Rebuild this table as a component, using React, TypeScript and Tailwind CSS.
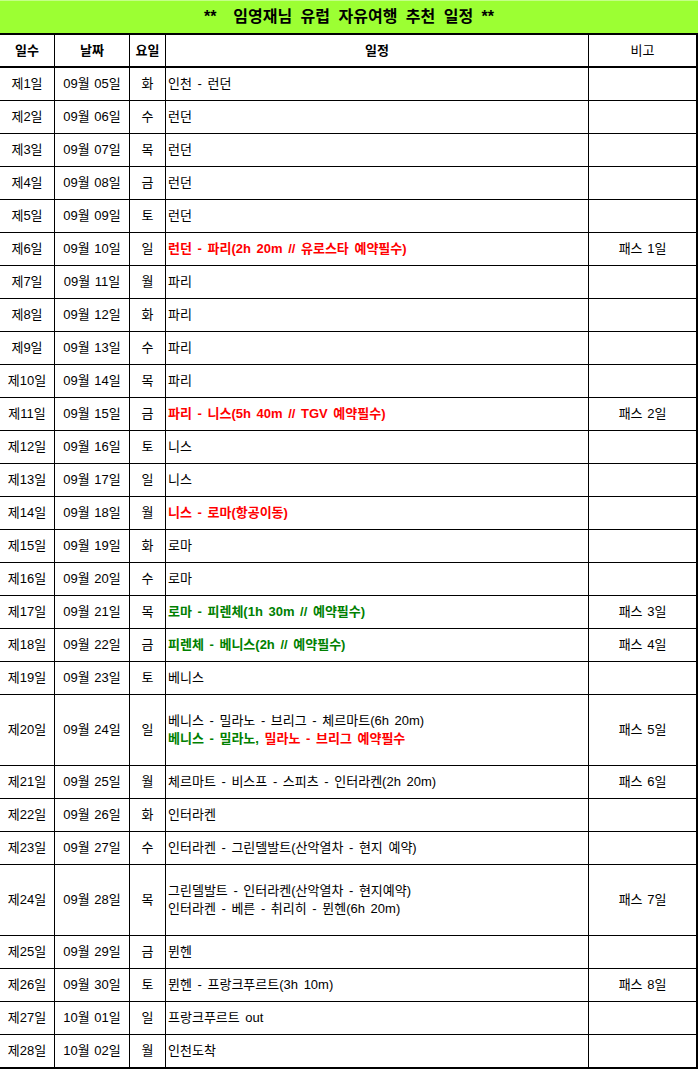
import React from 'react'

type Seg = { t: string; c?: 'red' | 'green' }
type Row = {
  day: number
  date: string
  dow: string
  plan: Seg[][]
  note?: string
}

const r = (t: string): Seg[][] => [[{ t, c: 'red' }]]
const g = (t: string): Seg[][] => [[{ t, c: 'green' }]]
const n = (t: string): Seg[][] => [[{ t }]]

const rows: Row[] = [
  { day: 1, date: '09월 05일', dow: '화', plan: n('인천 - 런던') },
  { day: 2, date: '09월 06일', dow: '수', plan: n('런던') },
  { day: 3, date: '09월 07일', dow: '목', plan: n('런던') },
  { day: 4, date: '09월 08일', dow: '금', plan: n('런던') },
  { day: 5, date: '09월 09일', dow: '토', plan: n('런던') },
  { day: 6, date: '09월 10일', dow: '일', plan: r('런던 - 파리(2h 20m // 유로스타 예약필수)'), note: '패스 1일' },
  { day: 7, date: '09월 11일', dow: '월', plan: n('파리') },
  { day: 8, date: '09월 12일', dow: '화', plan: n('파리') },
  { day: 9, date: '09월 13일', dow: '수', plan: n('파리') },
  { day: 10, date: '09월 14일', dow: '목', plan: n('파리') },
  { day: 11, date: '09월 15일', dow: '금', plan: r('파리 - 니스(5h 40m // TGV 예약필수)'), note: '패스 2일' },
  { day: 12, date: '09월 16일', dow: '토', plan: n('니스') },
  { day: 13, date: '09월 17일', dow: '일', plan: n('니스') },
  { day: 14, date: '09월 18일', dow: '월', plan: r('니스 - 로마(항공이동)') },
  { day: 15, date: '09월 19일', dow: '화', plan: n('로마') },
  { day: 16, date: '09월 20일', dow: '수', plan: n('로마') },
  { day: 17, date: '09월 21일', dow: '목', plan: g('로마 - 피렌체(1h 30m // 예약필수)'), note: '패스 3일' },
  { day: 18, date: '09월 22일', dow: '금', plan: g('피렌체 - 베니스(2h // 예약필수)'), note: '패스 4일' },
  { day: 19, date: '09월 23일', dow: '토', plan: n('베니스') },
  {
    day: 20,
    date: '09월 24일',
    dow: '일',
    plan: [
      [{ t: '베니스 - 밀라노 - 브리그 - 체르마트(6h 20m)' }],
      [
        { t: '베니스 - 밀라노,', c: 'green' },
        { t: ' 밀라노 - 브리그 예약필수', c: 'red' },
      ],
    ],
    note: '패스 5일',
  },
  { day: 21, date: '09월 25일', dow: '월', plan: n('체르마트 - 비스프 - 스피츠 - 인터라켄(2h 20m)'), note: '패스 6일' },
  { day: 22, date: '09월 26일', dow: '화', plan: n('인터라켄') },
  { day: 23, date: '09월 27일', dow: '수', plan: n('인터라켄 - 그린델발트(산악열차 - 현지 예약)') },
  {
    day: 24,
    date: '09월 28일',
    dow: '목',
    plan: [
      [{ t: '그린델발트 - 인터라켄(산악열차 - 현지예약)' }],
      [{ t: '인터라켄 - 베른 - 취리히 - 뮌헨(6h 20m)' }],
    ],
    note: '패스 7일',
  },
  { day: 25, date: '09월 29일', dow: '금', plan: n('뮌헨') },
  { day: 26, date: '09월 30일', dow: '토', plan: n('뮌헨 - 프랑크푸르트(3h 10m)'), note: '패스 8일' },
  { day: 27, date: '10월 01일', dow: '일', plan: n('프랑크푸르트 out') },
  { day: 28, date: '10월 02일', dow: '월', plan: n('인천도착') },
]

const segClass = (c?: 'red' | 'green') =>
  c === 'red' ? 'text-[#ff0000] font-bold' : c === 'green' ? 'text-[#008000] font-bold' : ''

export default function App() {
  return (
    <div
      className="w-[698px] h-[1070px] bg-white text-black text-[13px] overflow-hidden"
      style={{ fontFamily: '"Liberation Sans", "Noto Sans CJK KR", sans-serif' }}
    >
      <div className="h-[35px] flex items-center justify-center bg-[#9cff33] border-t border-[#c4ff88] border-b-2 border-b-black">
        <span className="whitespace-pre text-[16px] font-bold [word-spacing:4px]">**  임영재님 유럽 자유여행 추천 일정 **</span>
      </div>

      <div className="flex h-[33px] border-b-2 border-black font-bold">
        <div className="w-[55px] flex items-center justify-center border-r border-black">일수</div>
        <div className="w-[75px] flex items-center justify-center border-r border-black">날짜</div>
        <div className="w-[36px] flex items-center justify-center border-r border-black">요일</div>
        <div className="w-[423px] flex items-center justify-center border-r border-black">일정</div>
        <div className="w-[109px] flex items-center justify-center border-r-2 border-black font-normal">비고</div>
      </div>

      {rows.map((row, i) => {
        const tall = row.plan.length > 1
        const last = i === rows.length - 1
        const h = tall ? 'h-[71px]' : last ? 'h-[34px] border-b-2' : 'h-[33px]'
        return (
          <div key={row.day} className={`flex border-b border-black ${h}`}>
            <div className="w-[55px] flex items-center justify-center border-r border-black">제{row.day}일</div>
            <div className="w-[75px] flex items-center justify-center border-r border-black [word-spacing:1px]">{row.date}</div>
            <div className="w-[36px] flex items-center justify-center border-r border-black">{row.dow}</div>
            <div className="w-[423px] flex flex-col justify-center pl-[2px] border-r border-black leading-[18px] [word-spacing:2px]">
              {row.plan.map((line, li) => (
                <div key={li} className="whitespace-pre">
                  {line.map((s, si) => (
                    <span key={si} className={segClass(s.c)}>
                      {s.t}
                    </span>
                  ))}
                </div>
              ))}
            </div>
            <div className="w-[109px] flex items-center justify-center border-r-2 border-black [word-spacing:1px]">{row.note}</div>
          </div>
        )
      })}
    </div>
  )
}
